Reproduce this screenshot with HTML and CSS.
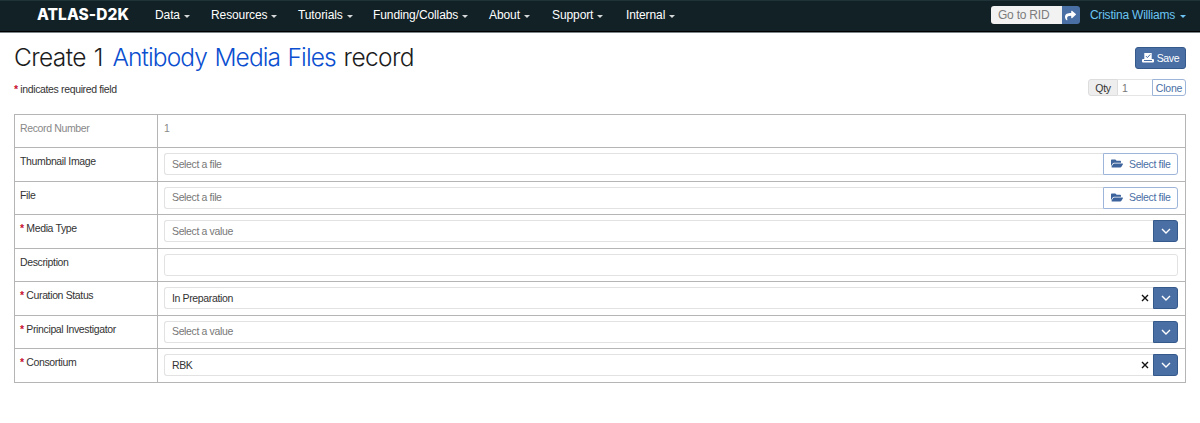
FILE: index.html
```html
<!DOCTYPE html>
<html lang="en">
<head>
<meta charset="utf-8">
<title>Create 1 Antibody Media Files record</title>
<link rel="stylesheet" href="styles.css">
</head>
<body>
<svg width="0" height="0" class="defs">
  <symbol id="chev" viewBox="0 0 10 6"><path d="M1 1l4 4 4-4" fill="none" stroke="#fff" stroke-width="1.4"/></symbol>
  <symbol id="folder" viewBox="0 0 576 512"><path fill="#3c639c" d="M572.700 292.100L500.300 416.200A64 64 0 0 1 445 448H45c-18.500 0-30-20-20.700-36.100l72.400-124.100A64 64 0 0 1 152 256h400c18.500 0 30 20.100 20.700 36.100zM152 224h328v-48c0-26.500-21.500-48-48-48H272l-64-64H48C21.500 64 0 85.500 0 112v278l69.100-118.400C86.200 242.200 118 224 152 224z"/></symbol>
  <symbol id="clear" viewBox="0 0 8 8"><path d="M1 1l6 6M7 1L1 7" fill="none" stroke="#111" stroke-width="1.4"/></symbol>
</svg>
<header class="navbar">
  <a class="brand">ATLAS-D2K</a>
  <nav class="menu">
    <a class="item data">Data<i class="caret"></i></a>
    <a class="item resources">Resources<i class="caret"></i></a>
    <a class="item tutorials">Tutorials<i class="caret"></i></a>
    <a class="item funding">Funding/Collabs<i class="caret"></i></a>
    <a class="item about">About<i class="caret"></i></a>
    <a class="item support">Support<i class="caret"></i></a>
    <a class="item internal">Internal<i class="caret"></i></a>
  </nav>
  <div class="rid"><span class="rid-input">Go to RID</span><span class="rid-go"><svg width="11" height="11" viewBox="0 0 512 512"><path fill="#fff" d="M503.700 189.800L327.700 37.900C312.300 24.500 288 35.300 288 56v80C127.400 137.900 0 170.100 0 322.300c0 61.400 39.600 122.300 83.300 154.100 13.700 9.900 33.100-2.500 28.100-18.600C66.100 312.800 132.900 274.300 288 272v88c0 20.700 24.300 31.500 39.700 18.200l176-152c11.100-9.600 11.100-26.800 0-36.400z"/></svg></span></div>
  <a class="user">Cristina Williams<i class="caret"></i></a>
</header>
<main class="page">
  <div class="title-row">
    <h1 class="title">Create 1 <a class="entity">Antibody Media Files</a> record</h1>
    <button class="save"><svg width="12" height="10" viewBox="0 0 12 10"><path fill="#fff" d="M2.300 0h7.400v6h1.300q1 0 1 1v1.500q0 1-1 1H1q-1 0-1-1V7q0-1 1-1h1.300z"/><path d="M4 3.100l1.400 1.500L8.200 1.500M2 7.500h8" fill="none" stroke="#4a6fa5" stroke-width="1"/></svg><span>Save</span></button>
  </div>
  <div class="sub-row">
    <p class="hint"><b class="req">*</b> indicates required field</p>
    <div class="clone"><span class="qty">Qty</span><span class="num">1</span><span class="clone-btn">Clone</span></div>
  </div>
  <div class="form">
    <div class="row"><div class="label muted">Record Number</div><div class="cell plain">1</div></div>
    <div class="row"><div class="label">Thumbnail Image</div><div class="cell"><span class="input joined placeholder">Select a file</span><span class="file-btn"><svg width="12" height="11"><use href="#folder"/></svg>Select file</span></div></div>
    <div class="row"><div class="label">File</div><div class="cell"><span class="input joined placeholder">Select a file</span><span class="file-btn"><svg width="12" height="11"><use href="#folder"/></svg>Select file</span></div></div>
    <div class="row"><div class="label"><b class="req">*</b> Media Type</div><div class="cell"><span class="input joined placeholder">Select a value</span><span class="drop"><svg width="10" height="6"><use href="#chev"/></svg></span></div></div>
    <div class="row"><div class="label">Description</div><div class="cell"><span class="input"></span></div></div>
    <div class="row"><div class="label"><b class="req">*</b> Curation Status</div><div class="cell"><span class="input joined">In Preparation<svg class="clear" width="8" height="8"><use href="#clear"/></svg></span><span class="drop"><svg width="10" height="6"><use href="#chev"/></svg></span></div></div>
    <div class="row"><div class="label"><b class="req">*</b> Principal Investigator</div><div class="cell"><span class="input joined placeholder">Select a value</span><span class="drop"><svg width="10" height="6"><use href="#chev"/></svg></span></div></div>
    <div class="row"><div class="label"><b class="req">*</b> Consortium</div><div class="cell"><span class="input joined">RBK<svg class="clear" width="8" height="8"><use href="#clear"/></svg></span><span class="drop"><svg width="10" height="6"><use href="#chev"/></svg></span></div></div>
  </div>
</main>
</body>
</html>
```
FILE: styles.css
```css
* { box-sizing: border-box; }
body { margin: 0; background: #fff; color: #333; font: 10.5px/14px "Liberation Sans", Arial, sans-serif; letter-spacing: -0.36px; overflow: hidden; }
.defs { display: block; position: absolute; }
.navbar { height: 33px; display: flex; align-items: center; padding: 0 14px 3px 37px; background: #122126; border-top: 1px solid #1f3338; border-bottom: 1px solid #7b8587; box-shadow: inset 0 -1px #000; color: #fff; font-size: 12px; letter-spacing: -0.1px; }
.brand { width: 118px; font: 800 15.5px/20px Inter, sans-serif; letter-spacing: 0.05px; white-space: nowrap; }
.menu { display: flex; flex: 1; }
.item { white-space: nowrap; }
.data { width: 56px; }
.resources { width: 87px; }
.tutorials { width: 75px; }
.funding { width: 116px; }
.about { width: 63px; }
.support { width: 74px; }
.caret { display: inline-block; margin-left: 5px; vertical-align: 1px; border: 3px solid transparent; border-top-color: currentColor; border-bottom: 0; }
.menu .caret { margin-left: 4px; border-top-color: #d5d9da; }
.rid { display: flex; width: 89px; height: 18px; border-radius: 3px; overflow: hidden; margin-right: 10px; }
.rid-input { flex: 1; padding-left: 7px; line-height: 18px; background: #f2f2f2; color: #7c7c7c; letter-spacing: -0.2px; }
.rid-go { width: 18px; background: #4a6fa5; display: flex; align-items: center; justify-content: center; }
.user { color: #6cc5f4; white-space: nowrap; letter-spacing: -0.21px; }
.page { padding: 10px 14px 0; }
.title-row { display: flex; justify-content: space-between; height: 37px; }
.title { margin: 0; font: 300 24.5px/28px Inter, sans-serif; letter-spacing: -0.6px; word-spacing: 1.5px; color: #1c1c1c; }
.entity { margin-left: 2px; color: #0b4fd0; letter-spacing: -0.9px; }
.save { width: 51px; height: 22px; margin: 4px 0 0; padding: 0; display: flex; align-items: center; justify-content: center; gap: 3px; border: 1px solid #36598c; border-radius: 3px; background: #4a6fa5; color: #fff; font: inherit; letter-spacing: -0.3px; }
.sub-row { display: flex; justify-content: space-between; height: 34px; }
.hint { margin: 2px 0 0; }
.req { color: #c8102e; }
.clone { display: flex; height: 17px; margin-top: -1px; line-height: 16px; }
.qty { width: 30px; text-align: center; background: #eee; border: 1px solid #ddd; border-radius: 3px 0 0 3px; }
.num { width: 34px; padding-left: 4px; color: #777; border: solid #e5e5e5; border-width: 1px 0; }
.clone-btn { width: 34px; text-align: center; color: #4a6fa5; border: 1px solid #9db5d8; border-radius: 0 3px 3px 0; letter-spacing: -0.2px; }
.form { border: 1px solid #b5b5b5; border-top: 0; height: 269px; display: grid; grid-template-rows: 33px repeat(7, 1fr); }
.row { display: grid; grid-template-columns: 142px 1fr; border-top: 1px solid #b5b5b5; min-height: 0; }
.label { padding: 6px 0 0 5px; line-height: 14px; white-space: nowrap; }
.muted, .plain { color: #888; }
.cell { display: flex; border-left: 1px solid #b5b5b5; padding: 5px 7px 0 6px; }
.cell.plain { padding-top: 6px; }
.input { flex: 1; height: 22px; display: flex; align-items: center; padding: 0 6px 1px 7px; border: 1px solid #e2e2e2; border-radius: 3px; }
.joined { border-right: 0; border-radius: 3px 0 0 3px; }
.placeholder { color: #777; }
.clear { margin-left: auto; margin-right: -2px; }
.file-btn { width: 75px; height: 22px; display: flex; align-items: center; gap: 6px; padding: 0 0 1px 7px; color: #4a6fa5; border: 1px solid #9db5d8; border-radius: 0 3px 3px 0; white-space: nowrap; }
.drop { width: 25px; height: 22px; display: flex; align-items: center; justify-content: center; background: #4a6fa5; border: 1px solid #36598c; border-radius: 0 3px 3px 0; }
```
